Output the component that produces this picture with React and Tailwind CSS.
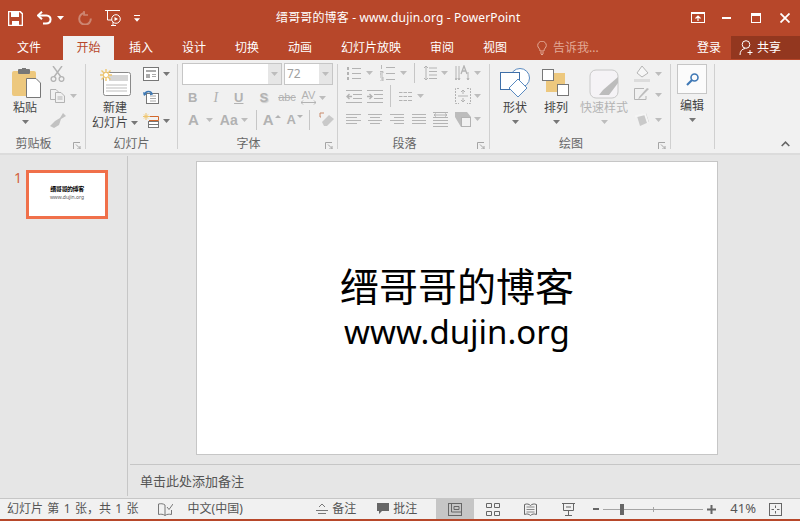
import React from "react";

const S = ({ w = 16, h = 16, vb, className = "", children }) => (
  <svg width={w} height={h} viewBox={vb || `0 0 ${w} ${h}`} fill="none" className={`block shrink-0 ${className}`}>
    {children}
  </svg>
);

const Caret = ({ c = "#777", className = "" }) => (
  <S w={7} h={4} className={className}><path d="M0 0H7L3.5 4Z" fill={c} /></S>
);
const GCaret = () => <Caret c="#bdbdbd" />;

const Launcher = () => (
  <S w={8} h={7}>
    <path d="M.5 7V.5H7" stroke="#a5a5a5" />
    <path d="M3 2.5L7 6.5M7 4V7H4" stroke="#a5a5a5" />
  </S>
);

const Lines = ({ w = 15, h = 13, n = 4, x1 = 0, x2, c = "#b5b5b5" }) => (
  <S w={w} h={h}>
    {Array.from({ length: n }).map((_, i) => {
      const y = Math.round((i * (h - 1)) / (n - 1)) + 0.5;
      const odd = i % 2 === 1;
      return <path key={i} d={`M${odd ? x1 : 0} ${y}H${odd ? x2 || w : w}`} stroke={c} />;
    })}
  </S>
);

const Group = ({ w, label, launcher, children, pad = "" }) => (
  <div className={`flex h-full flex-col border-r border-[#d0d0d0] ${w}`}>
    <div className={`flex min-h-0 flex-1 ${pad}`}>{children}</div>
    <div className={`relative -mb-[4px] flex h-[19px] shrink-0 items-center justify-center text-[12px] leading-[16px] text-[#666] ${launcher ? "pr-[18px]" : ""}`}>
      {label}
      {launcher && <span className="absolute right-[4px] top-[8px]"><Launcher /></span>}
    </div>
  </div>
);

const Big = ({ icon, l1, l2, caret, w, muted, caretInline }) => (
  <div className={`flex flex-col items-center ${w}`}>
    <div className="flex h-[36px] shrink-0 items-center justify-center">{icon}</div>
    <div className={`whitespace-nowrap text-[12px] leading-[15px] ${muted ? "text-[#b4b4b4]" : "text-[#444]"}`}>{l1}</div>
    {l2 && (
      <div className="flex items-center gap-[3px] whitespace-nowrap text-[12px] leading-[15px] text-[#444]">
        {l2}
        {caretInline && <Caret />}
      </div>
    )}
    {caret && <div className="mt-[5px]"><Caret c={muted ? "#bdbdbd" : "#777"} /></div>}
  </div>
);

const Tab = ({ children, active, w, extra = "" }) => (
  <div className={`flex h-[24px] items-center justify-center text-[12px] ${w} ${extra} ${active ? "bg-[#f1f1f1] text-[#b7472a]" : "text-white"}`}>
    {children}
  </div>
);

const A = "#b3b3b3";

const Bullets = () => (
  <S w={15} h={15}>
    <path d="M1 2.5H3M1 7.5H3M1 12.5H3" stroke={A} strokeWidth="3" />
    <path d="M6 2.5H15M6 7.5H15M6 12.5H15" stroke={A} />
  </S>
);
const Numbered = () => (
  <S w={15} h={16}>
    <path d="M1.5 0V4M0 6.5H3V8H0V10H3M0 12H3V16H0M1 14H3" stroke={A} strokeWidth=".9" />
    <path d="M6 2.5H15M6 8.5H15M6 14.5H15" stroke={A} />
  </S>
);
const Indent = ({ dir }) => (
  <S w={16} h={13}>
    <path d="M0 .5H16M7 4.5H16M7 8.5H16M0 12.5H16" stroke={A} />
    {dir < 0 ? <path d="M6 6.5H1M3.5 4L1 6.5L3.5 9" stroke={A} strokeWidth="1.4" /> : <path d="M0 6.5H5M2.5 4L5 6.5L2.5 9" stroke={A} strokeWidth="1.4" />}
  </S>
);

function Ribbon() {
  return (
    <div className="flex h-[95px] shrink-0 border-b-[2px] border-[#dcdcdc] bg-[#f1f1f1] py-[4px]">
      {/* clipboard */}
      <Group w="w-[86px]" label="剪贴板" launcher pad="pl-[10px]">
        <div className="flex">
          <Big
            w="w-[30px]"
            l1="粘贴"
            caret
            icon={
              <S w={29} h={30} className="mt-[2px] ml-[3px]">
                <rect x="0" y="3" width="24" height="25" rx="2" fill="#edc87e" />
                <rect x="6" y="1" width="12" height="5" rx="1" fill="#777" />
                <rect x="10" y="0" width="4" height="3" fill="#777" />
                <path d="M14.5 10.5H24L28.5 15V29.5H14.5Z" fill="#fff" stroke="#777" />
              </S>
            }
          />
          <div className="ml-[10px] flex flex-col pt-[2px]">
            <S w={15} h={16}>
              <path d="M3 0L11 11M12 0L4 11" stroke={A} strokeWidth="1.4" />
              <circle cx="3.5" cy="13" r="2.4" stroke={A} strokeWidth="1.3" />
              <circle cx="11.5" cy="13" r="2.4" stroke={A} strokeWidth="1.3" />
            </S>
            <div className="mt-[7px] flex items-center gap-[5px]">
              <S w={15} h={14}>
                <path d="M.5.5H6L8 2.5V10.5H.5Z" stroke={A} />
                <path d="M5.5 3.5H11L14.5 7V13.5H5.5Z" fill="#f1f1f1" stroke={A} />
                <path d="M7.5 8H12.5M7.5 10H12.5" stroke={A} />
              </S>
              <GCaret />
            </div>
            <S w={16} h={15} className="mt-[10px]">
              <path d="M10 5L13 0L16 3L11 6L9 12L4 15L0 13L5 8Z" fill="#c2c2c2" />
            </S>
          </div>
        </div>
      </Group>

      {/* slides */}
      <Group w="w-[92px]" label="幻灯片" pad="pl-[5px]">
        <Big
          w="w-[48px]"
          l1="新建"
          l2="幻灯片"
          caretInline
          icon={
            <S w={31} h={28} className="mt-[1px]">
              <rect x="3.5" y="3.5" width="27" height="23" rx="2" fill="#fff" stroke="#8a8a8a" />
              <rect x="9" y="6" width="19" height="6" fill="#d6d6d6" />
              <path d="M6 16H27M6 19H27M6 22H27" stroke="#bdbdbd" />
              <path d="M6 0V12M0 6H12M1.5 1.5L10.5 10.5M10.5 1.5L1.5 10.5" stroke="#efc66f" strokeWidth="1.4" />
              <circle cx="6" cy="6" r="2.6" fill="#fff" stroke="#efc66f" />
            </S>
          }
        />
        <div className="ml-[4px] flex flex-col gap-[9px] pt-[3px]">
          <div className="flex items-center gap-[4px]">
            <S w={16} h={14}>
              <rect x=".5" y=".5" width="15" height="13" fill="#fff" stroke="#777" />
              <path d="M3 3H13V5H3ZM3 7H7V11H3Z" fill="#aaa" />
              <path d="M9 7.5H13M9 9.5H13" stroke="#aaa" />
            </S>
            <Caret />
          </div>
          <S w={16} h={14}>
            <rect x="3.5" y="3.5" width="12" height="10" fill="#fff" stroke="#777" />
            <path d="M7 6H13M7 8.5H13M7 11H13" stroke="#aaa" />
            <path d="M1 4.5C3 .5 8 .5 9 4L7 4.5" stroke="#3c78b4" strokeWidth="1.6" />
            <path d="M0 2L1 6L4 4Z" fill="#3c78b4" />
          </S>
          <div className="flex items-center gap-[4px]">
            <S w={16} h={15}>
              <path d="M3 0V7M0 3.5H7M1 1.5L5 5.5M5 1.5L1 5.5" stroke="#efc66f" />
              <path d="M7 3.5H15.5V7.5H6" stroke="#d2682c" />
              <rect x="5.5" y="8.5" width="10" height="6" fill="#fff" stroke="#777" />
              <path d="M5.5 11.5H15.5" stroke="#777" />
            </S>
            <Caret />
          </div>
        </div>
      </Group>

      {/* font */}
      <Group w="w-[160px]" label="字体" launcher pad="pl-[4px]">
        <div className="-mt-[1px] flex flex-col">
          <div className="flex gap-[2px]">
            <div className="flex h-[22px] w-[100px] justify-end border border-[#c6c6c6] bg-white">
              <div className="flex w-[13px] items-center justify-center bg-[#e6e6e6]"><GCaret /></div>
            </div>
            <div className="flex h-[22px] w-[49px] items-center border border-[#c6c6c6] bg-white pl-[2px] text-[12px] text-[#a0a0a0]">
              <span className="flex-1">72</span>
              <div className="flex h-full w-[13px] items-center justify-center bg-[#e6e6e6]"><GCaret /></div>
            </div>
          </div>
          <div className="mt-[1px] flex h-[23px] items-center pl-[6px] text-[13px] font-bold text-[#b2b2b2] [font-family:'Liberation_Sans',sans-serif]">
            <span>B</span>
            <span className="ml-[16px] font-normal italic [font-family:'Liberation_Serif',serif] text-[14px]">I</span>
            <span className="ml-[16px] underline">U</span>
            <span className="ml-[16px] [text-shadow:1px_1px_1px_#ccc]">S</span>
            <span className="ml-[10px] font-normal line-through text-[11px]">abc</span>
            <span className="ml-[5px] flex items-center gap-[3px] font-normal leading-none">
              <span className="flex flex-col items-center text-[11px] leading-[10px]">AV<S w={15} h={5}><path d="M0 2.5H15M2 .5L0 2.5L2 4.5M13 .5L15 2.5L13 4.5" stroke={A} /></S></span>
              <GCaret />
            </span>
          </div>
          <div className="-mt-[1px] flex h-[24px] items-center pl-[6px] text-[#b2b2b2] [font-family:'Liberation_Sans',sans-serif]">
            <span className="text-[15px] font-bold">A</span>
            <span className="ml-[7px]"><GCaret /></span>
            <span className="ml-[7px] text-[14px] font-bold">Aa</span>
            <span className="ml-[3px]"><GCaret /></span>
            <span className="ml-[8px] h-[20px] border-l border-[#c6c6c6]" />
            <span className="ml-[6px] text-[15px] font-bold">A</span>
            <S w={6} h={3} className="mb-[8px] ml-[1px]"><path d="M0 3H6L3 0Z" fill={A} /></S>
            <span className="ml-[6px] text-[13px] font-bold">A</span>
            <S w={6} h={3} className="mb-[8px] ml-[1px]"><path d="M0 0H6L3 3Z" fill={A} /></S>
            <span className="ml-[6px] h-[20px] border-l border-[#c6c6c6]" />
            <span className="ml-[9px]">
              <S w={16} h={16}>
                <path d="M2 5H1V1H5" stroke="#c98a6a" />
                <path d="M3 10L10 3L15 7L8 14H5Z" fill="#c9c9c9" />
              </S>
            </span>
          </div>
        </div>
      </Group>

      {/* paragraph */}
      <Group w="w-[152px]" label="段落" launcher pad="pl-[8px]">
        <div className="flex w-full flex-col">
          <div className="flex h-[18px] items-center">
            <Bullets />
            <span className="ml-[5px]"><GCaret /></span>
            <span className="ml-[7px]"><Numbered /></span>
            <span className="ml-[5px]"><GCaret /></span>
            <span className="ml-[7px] h-[20px] border-l border-[#c6c6c6]" />
            <span className="ml-[8px]">
              <S w={14} h={16}>
                <path d="M3 1V15M1 3L3 1L5 3M1 13L3 15L5 13" stroke={A} />
                <path d="M6 3H14M6 6.5H14M6 10H14M6 13.5H14" stroke={A} />
              </S>
            </span>
            <span className="ml-[4px]"><GCaret /></span>
            <span className="ml-[7px]">
              <S w={16} h={16}>
                <path d="M1 1V15M4 1V15M13 7V15M0 13L1 15L2 13M3 13L4 15L5 13M12 13L13 15L14 13" stroke={A} />
                <path d="M6 9L9 1L12 9M7 6H11" stroke={A} strokeWidth="1.3" />
              </S>
            </span>
            <span className="ml-[3px]"><GCaret /></span>
          </div>
          <div className="mt-[3px] flex h-[22px] items-center">
            <Indent dir={-1} />
            <span className="ml-[5px]"><Indent dir={1} /></span>
            <span className="ml-[7px] h-[22px] border-l border-[#c6c6c6]" />
            <span className="ml-[8px]"><S w={13} h={9}><path d="M0 .5H3.5M4.5 .5H8M9 .5H13M0 4.5H3.5M4.5 4.5H8M9 4.5H13M0 8.5H3.5M4.5 8.5H8M9 8.5H13" stroke={A} /></S></span>
            <span className="ml-[5px]"><GCaret /></span>
            <span className="ml-[31px]">
              <S w={16} h={16}>
                <path d="M4 .5H.5V15.5H4M12 .5H15.5V15.5H12" stroke={A} strokeDasharray="2 1" />
                <path d="M8 2V6M6 4L8 2L10 4M8 14V10M6 12L8 14L10 12M3 8H13" stroke={A} />
              </S>
            </span>
            <span className="ml-[3px]"><GCaret /></span>
          </div>
          <div className="mt-[1px] flex h-[22px] items-center">
            <Lines w={15} h={10} x2={11} />
            <span className="ml-[7px]"><Lines w={14} h={10} x1={2} x2={12} /></span>
            <span className="ml-[8px]"><Lines w={14} h={10} x1={4} /></span>
            <span className="ml-[8px]"><Lines w={14} h={10} /></span>
            <span className="ml-[7px]">
              <S w={15} h={15}>
                <path d="M0 .5H15M0 14.5H15M0 11.5H15M0 8.5H15M0 5.5H15" stroke={A} />
                <path d="M1 3H14M3 1.5L1 3L3 4.5M12 1.5L14 3L12 4.5" stroke={A} />
              </S>
            </span>
            <span className="ml-[7px]">
              <S w={16} h={15}>
                <path d="M0 0H12L16 5H6V15L0 5Z" fill="#bcbcbc" />
                <rect x="6.5" y="5.5" width="9" height="9" fill="#f1f1f1" stroke={A} />
              </S>
            </span>
            <span className="ml-[3px]"><GCaret /></span>
          </div>
        </div>
      </Group>

      {/* drawing */}
      <Group w="w-[181px]" label="绘图" launcher pad="pl-[6px]">
        <Big
          w="w-[38px]"
          l1="形状"
          caret
          icon={
            <S w={30} h={30} className="mt-[1px]">
              <circle cx="20" cy="10" r="9.5" fill="#fff" stroke="#5a8ac0" />
              <rect x=".5" y="4.5" width="19" height="17" fill="#fff" stroke="#3f6fa8" strokeWidth="1" />
              <path d="M18 11L27 20L18 29L9 20Z" fill="#fff" stroke="#5a8ac0" />
            </S>
          }
        />
        <Big
          w="w-[44px]"
          l1="排列"
          caret
          icon={
            <S w={28} h={28} className="mt-[1px]">
              <rect x="4" y="4" width="19" height="19" fill="#edc87e" />
              <rect x=".5" y=".5" width="11" height="11" fill="#fff" stroke="#777" />
              <rect x="15.5" y="15.5" width="11" height="11" fill="#fff" stroke="#777" />
            </S>
          }
        />
        <div className="ml-[1px]">
          <Big
            w="w-[50px]"
            l1="快速样式"
            muted
            caret
            icon={
              <S w={30} h={30} className="mt-[3px]">
                <rect x="1" y="1" width="28" height="28" rx="6" fill="#f5f3f6" stroke="#c8c8c8" />
                <path d="M29 8L14 21L10 26L20 26L29 14Z" fill="#bcbcbc" />
              </S>
            }
          />
        </div>
        <div className="ml-[5px] flex flex-col pt-[1px]">
          <div className="flex items-center gap-[5px]">
            <S w={16} h={17}>
              <path d="M8 1L14 8L8 12L3 8Z" fill="#f7f7f7" stroke="#b5b5b5" />
              <rect y="14" width="16" height="3" fill="#dcdcdc" />
            </S>
            <GCaret />
          </div>
          <div className="mt-[6px] flex items-center gap-[5px]">
            <S w={16} h={13}>
              <path d="M10 .5H.5V11.5H12V8" stroke="#b5b5b5" />
              <path d="M15 1L6 10L4 12L5 9L13 0Z" fill="#bdbdbd" />
            </S>
            <GCaret />
          </div>
          <div className="mt-[12px] flex items-center gap-[5px]">
            <S w={16} h={14}>
              <path d="M3 3L12 0L15 9L6 13Z" fill="#c9c9c9" />
              <path d="M1 3.5L11 1L14 10" stroke="#f5f5f5" strokeWidth="2" />
            </S>
            <GCaret />
          </div>
        </div>
      </Group>

      {/* edit */}
      <Group w="w-[44px]" label="" pad="pl-[6px]">
        <div className="flex w-[30px] flex-col items-center">
          <div className="flex h-[30px] w-[30px] shrink-0 items-center justify-center border border-[#c6c6c6] bg-[#fbfbfb]">
            <S w={13} h={13}>
              <circle cx="8.5" cy="4.5" r="3.5" stroke="#3f78b5" strokeWidth="1.6" />
              <path d="M6 7L1 12" stroke="#3f78b5" strokeWidth="2.2" />
            </S>
          </div>
          <div className="mt-[4px] whitespace-nowrap text-[12px] leading-[15px] text-[#444]">编辑</div>
          <div className="mt-[5px]"><Caret /></div>
        </div>
      </Group>

      <div className="flex flex-1 items-end justify-end pb-[2px] pr-[10px]">
        <S w={9} h={6}><path d="M.7 5L4.5 1.2L8.3 5" stroke="#666" strokeWidth="1.6" /></S>
      </div>
    </div>
  );
}

export default function App() {
  return (
    <div className="flex h-[521px] w-[800px] flex-col overflow-hidden bg-[#e6e6e6] [font-family:'Noto_Sans','Noto_Sans_CJK_SC',sans-serif]">
      {/* title bar */}
      <div className="relative flex h-[36px] shrink-0 items-center bg-[#b7472a] pl-[8px] text-white">
        <S w={15} h={15}>
          <path d="M.5 1A.5.5 0 0 1 1 .5H12L14.5 3V14A.5.5 0 0 1 14 14.5H1A.5.5 0 0 1 .5 14Z" fill="none" stroke="#fff" strokeWidth="1.6" />
          <rect x="3" y="1" width="8" height="5" fill="#fff" />
          <rect x="4" y="10" width="7" height="5" fill="#fff" />
        </S>
        <span className="ml-[14px]">
          <S w={15} h={14}>
            <path d="M1.5 4.5H9.5C15 4.5 15 12.5 9 12.5H6" stroke="#fff" strokeWidth="2" />
            <path d="M5 0.8L1 4.5L5 8.2" stroke="#fff" strokeWidth="2" />
          </S>
        </span>
        <span className="ml-[5px]"><Caret c="#fff" /></span>
        <span className="ml-[14px]">
          <S w={14} h={14}>
            <path d="M7 2A5.8 5.8 0 1 0 12.8 7.5" stroke="#cd8672" strokeWidth="2" />
            <path d="M6 0V4H10" stroke="#cd8672" strokeWidth="1.6" />
          </S>
        </span>
        <span className="ml-[13px]">
          <S w={16} h={16}>
            <path d="M0 .5H15M2.5 1V10H7M6 15.5H11" stroke="#fff" />
            <circle cx="11" cy="9" r="4.3" stroke="#fff" />
            <path d="M9.5 7V11L13 9Z" fill="#fff" />
            <path d="M8 12V15" stroke="#fff" />
          </S>
        </span>
        <span className="ml-[13px] flex flex-col gap-[2px]">
          <span className="h-px w-[6px] bg-white" />
          <Caret c="#fff" className="w-[6px]" />
        </span>
        <div className="absolute left-[276px] top-[10px] text-[12px] leading-[16px] tracking-[0.15px]">缙哥哥的博客 - www.dujin.org - PowerPoint</div>
        <div className="ml-auto flex items-center pr-[10px]">
          <S w={14} h={12}>
            <rect x=".5" y=".5" width="13" height="10" stroke="#fff" />
            <path d="M0 1H14" stroke="#fff" strokeWidth="2" />
            <path d="M7 9V4M4.5 6.5L7 4L9.5 6.5" stroke="#fff" strokeWidth="1.2" />
          </S>
          <span className="ml-[17px] h-[2px] w-[9px] bg-white" />
          <span className="ml-[20px] h-[10px] w-[10px] border border-t-[3px] border-white" />
          <span className="ml-[19px]">
            <S w={10} h={10}><path d="M.5.5L9.5 9.5M9.5.5L.5 9.5" stroke="#fff" strokeWidth="1.8" /></S>
          </span>
        </div>
      </div>

      {/* tabs */}
      <div className="flex h-[24px] shrink-0 items-center bg-[#b7472a]">
        <Tab w="w-[63px]" extra="pr-[5px]">文件</Tab>
        <Tab w="w-[51px]" active>开始</Tab>
        <Tab w="w-[54px]">插入</Tab>
        <Tab w="w-[52px]">设计</Tab>
        <Tab w="w-[54px]">切换</Tab>
        <Tab w="w-[52px]">动画</Tab>
        <Tab w="w-[90px]">幻灯片放映</Tab>
        <Tab w="w-[52px]">审阅</Tab>
        <Tab w="w-[54px]">视图</Tab>
        <div className="ml-[15px] flex items-center gap-[6px] text-[12px] text-[#e2a996]">
          <S w={10} h={14}>
            <path d="M3 10C3 7 .7 7 .7 4.5A4.3 4.3 0 0 1 9.3 4.5C9.3 7 7 7 7 10Z" stroke="#e2a996" />
            <path d="M3 12H7M4 13.5H6" stroke="#e2a996" />
          </S>
          告诉我...
        </div>
        <div className="ml-auto flex h-full items-center text-[12px] text-white">
          <span className="mr-[10px]">登录</span>
          <div className="flex h-[23px] w-[69px] items-center gap-[3px] self-start bg-[#93371f] pl-[8px]">
            <S w={15} h={15}>
              <circle cx="7" cy="4.5" r="3.8" stroke="#fff" />
              <path d="M1 15C1 11 3 9 6 8.5M11 10V15M8.5 12.5H13.5" stroke="#fff" />
            </S>
            共享
          </div>
        </div>
      </div>

      <Ribbon />

      {/* workspace */}
      <div className="flex min-h-0 flex-1">
        <div className="mt-[1px] mb-[2px] flex w-[128px] shrink-0 border-r border-[#c6c6c6] pt-[14px]">
          <span className="ml-[14px] text-[14px] leading-[16px] text-[#d2623f]">1</span>
          <div className="ml-[4px] flex h-[49px] w-[82px] flex-col items-center justify-center border-[3px] border-[#f0704a] bg-white pb-[3px] text-black">
            <div className="whitespace-nowrap text-[6px] font-bold leading-[7px] tracking-[-0.4px]">缙哥哥的博客</div>
            <div className="mt-[1px] whitespace-nowrap text-[5px] leading-[6px] text-[#555]">www.dujin.org</div>
          </div>
        </div>
        <div className="flex min-w-0 flex-1 flex-col pl-[2px]">
          <div className="flex flex-1 items-start pl-[66px] pt-[6px]">
            <div className="flex h-[294px] w-[522px] flex-col items-center justify-center border border-[#c6c6c6] bg-white pb-[2px] text-black">
              <div className="text-[39px] leading-[50px]">缙哥哥的博客</div>
              <div className="text-[33px] leading-[42px]">www.dujin.org</div>
            </div>
          </div>
          <div className="flex h-[34px] items-center border-t border-[#c6c6c6] pl-[10px] text-[13px] text-[#555]">单击此处添加备注</div>
        </div>
      </div>

      {/* status */}
      <div className="flex h-[23px] shrink-0 items-stretch border-t border-[#c6c6c6] border-b-[2px] border-b-[#b7472a] bg-[#f1f1f1] text-[12px] text-[#555]">
        <span className="ml-[7px] self-center [word-spacing:1.25px]">幻灯片 第 1 张，共 1 张</span>
        <span className="ml-[19px] self-center">
          <S w={15} h={13}>
            <path d="M7 2C5 .5 3 .5 .5 1V11.5C3 11 5 11 7 12.5V2ZM7 12.5C9 11 11 11 13.5 11.5V7" stroke="#777" />
            <path d="M9 4L11 6.5L15 1" stroke="#777" />
          </S>
        </span>
        <span className="ml-[15px] self-center">中文(中国)</span>
        <span className="ml-auto self-center">
          <S w={12} h={12}><path d="M3 4L6 1L9 4M0 7.5H12M2 10.5H10" stroke="#777" /></S>
        </span>
        <span className="ml-[4px] self-center">备注</span>
        <span className="ml-[21px] self-center">
          <S w={12} h={12}><path d="M0 0H12V8H5L2 11V8H0Z" fill="#666" /></S>
        </span>
        <span className="ml-[4px] self-center">批注</span>
        <div className="ml-[19px] flex w-[38px] items-center justify-center bg-[#c6c6c6]">
          <S w={14} h={13}>
            <rect x=".5" y=".5" width="13" height="12" stroke="#666" />
            <path d="M3.5 1V9H13M6 3.5H11V6.5H6Z" stroke="#666" />
          </S>
        </div>
        <span className="ml-[12px] self-center">
          <S w={14} h={13}><path d="M.5.5H5.5V4.5H.5ZM8.5.5H13.5V4.5H8.5ZM.5 8.5H5.5V12.5H.5ZM8.5 8.5H13.5V12.5H8.5Z" stroke="#666" /></S>
        </span>
        <span className="ml-[24px] self-center">
          <S w={13} h={13}>
            <path d="M.5 1.5C3 .5 5 1 6.5 2.5C8 1 10 .5 12.5 1.5V11.5C10 10.5 8 11 6.5 12.5C5 11 3 10.5 .5 11.5Z" stroke="#666" />
            <path d="M2.5 4H10.5M2.5 6.5H10.5M2.5 9H10.5" stroke="#888" />
          </S>
        </span>
        <span className="ml-[25px] self-center">
          <S w={13} h={13}><path d="M0 .5H13M1.5 1V7.5H11.5V1M6.5 8V12M3 12.5H10M4 4H9" stroke="#666" /></S>
        </span>
        <span className="ml-[18px] h-[2px] w-[6px] self-center bg-[#666]" />
        <div className="relative ml-[4px] flex w-[100px] items-center self-center">
          <span className="h-px w-full bg-[#a5a5a5]" />
          <span className="absolute left-[50px] top-[-2px] h-[5px] w-px bg-[#a5a5a5]" />
          <span className="absolute left-[17px] top-[-5px] h-[11px] w-[4px] bg-[#666]" />
        </div>
        <span className="ml-[4px] self-center">
          <S w={9} h={9}><path d="M0 4.5H9M4.5 0V9" stroke="#666" strokeWidth="2" /></S>
        </span>
        <span className="ml-[14px] self-center text-[13px]">41%</span>
        <span className="ml-[13px] mr-[18px] self-center">
          <S w={13} h={13}>
            <rect x=".5" y=".5" width="12" height="12" stroke="#666" />
            <path d="M6.5 2.5V5M6.5 8V10.5M2.5 6.5H5M8 6.5H10.5" stroke="#666" />
          </S>
        </span>
      </div>
    </div>
  );
}
